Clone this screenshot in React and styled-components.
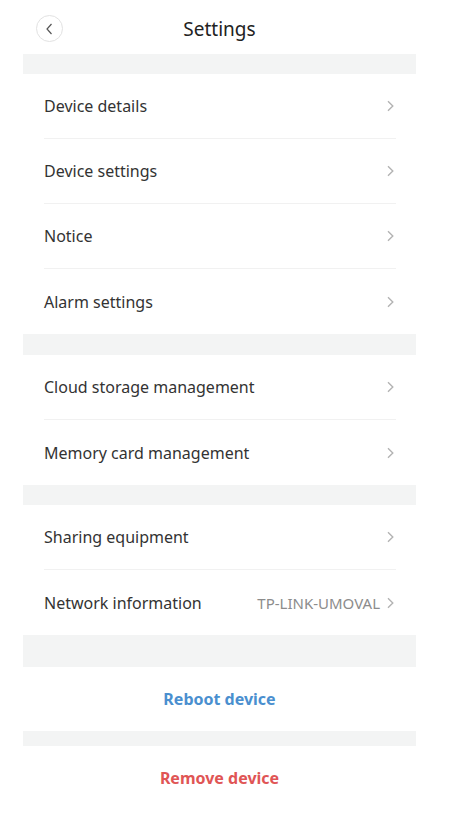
import React from 'react';
import styled, { createGlobalStyle } from 'styled-components';

const GlobalStyle = createGlobalStyle`
    html, body {
        margin: 0;
        padding: 0;
        background: #ffffff;
    }
    body {
        font-family: "Noto Sans", "Open Sans", sans-serif;
        color: #333333;
    }
`;

const Page = styled.div`
    width: 393px;
    margin-left: 23px;
    display: flex;
    flex-direction: column;
    background: #ffffff;
`;

const Header = styled.div`
    height: 54px;
    display: flex;
    align-items: center;
    justify-content: center;
    position: relative;
`;

const BackButton = styled.div`
    position: absolute;
    left: 13px;
    top: 15px;
    width: 25px;
    height: 25px;
    border: 1px solid #e2e2e2;
    border-radius: 50%;
    display: flex;
    align-items: center;
    justify-content: center;
`;

const Title = styled.div`
    font-size: 19px;
    color: #222222;
    margin-top: 4px;
`;

const Band = styled.div`
    height: ${({h}) => h}px;
    background: #f3f4f4;
`;

const Row = styled.div`
    height: 65px;
    margin: 0 20px 0 21px;
    display: flex;
    align-items: center;
    border-bottom: ${({last}) => last ? 'none' : '1px solid #f1f1f1'};
    box-sizing: border-box;
`;

const Label = styled.div`
    flex: 1;
    font-size: 16px;
    color: #333333;
`;

const Value = styled.div`
    font-size: 15px;
    color: #8c8c8c;
    margin-right: 6px;
`;

const Action = styled.div`
    height: ${({h}) => h}px;
    display: flex;
    align-items: center;
    justify-content: center;
    font-size: 16px;
    font-weight: 700;
    color: ${({color}) => color};
`;

const Chevron = () => (
    <svg width="9" height="12" viewBox="0 0 9 12" style={{marginRight: 1}}>
        <path d="M2 1.3 L6.8 6 L2 10.7" fill="none" stroke="#b3b3b3" strokeWidth="1.4" />
    </svg>
);

const Item = ({label, value, last}) => (
    <Row last={last}>
        <Label>{label}</Label>
        {value && <Value>{value}</Value>}
        <Chevron />
    </Row>
);

export default function App() {
    return <>
        <GlobalStyle />
        <Page>
            <Header>
                <BackButton>
                    <svg width="10" height="12" viewBox="0 0 10 12">
                        <path d="M6.5 1 L2 6 L6.5 11" fill="none" stroke="#555" strokeWidth="1.2" />
                    </svg>
                </BackButton>
                <Title>Settings</Title>
            </Header>
            <Band h={20} />
            <Item label="Device details" />
            <Item label="Device settings" />
            <Item label="Notice" />
            <Item label="Alarm settings" last />
            <Band h={21} />
            <Item label="Cloud storage management" />
            <Item label="Memory card management" last />
            <Band h={20} />
            <Item label="Sharing equipment" />
            <Item label="Network information" value="TP-LINK-UMOVAL" last />
            <Band h={32} />
            <Action h={64} color="#4a8fcf">Reboot device</Action>
            <Band h={15} />
            <Action h={64} color="#e05555">Remove device</Action>
        </Page>
    </>
}
